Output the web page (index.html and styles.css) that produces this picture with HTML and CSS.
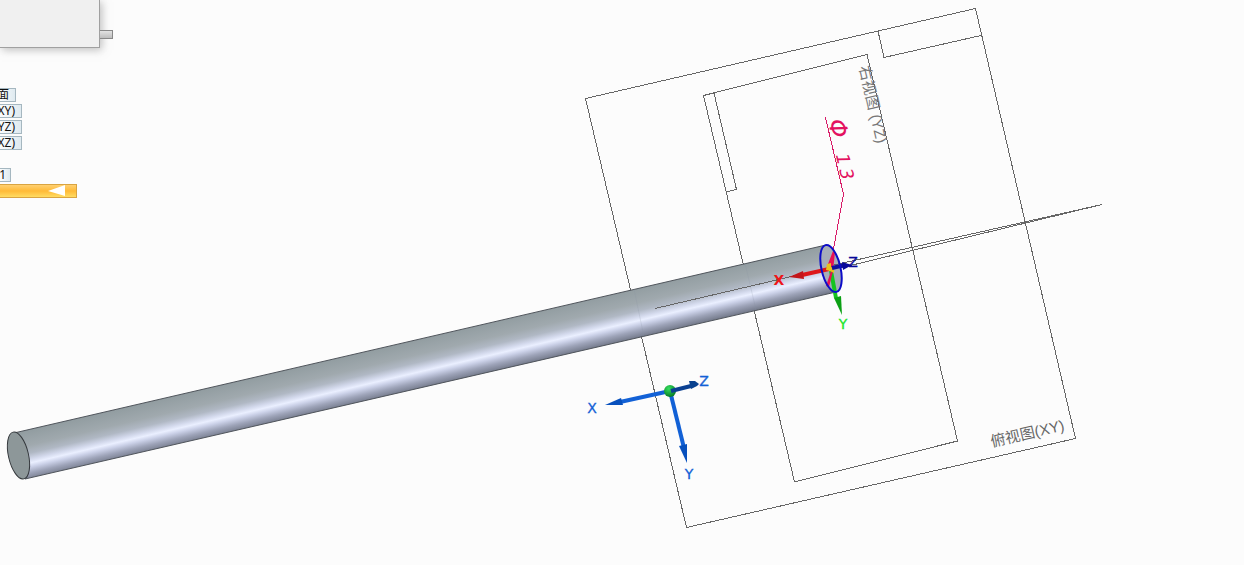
FILE: index.html
```
<!DOCTYPE html>
<html lang="zh-CN">
<head>
<meta charset="utf-8">
<title>俯视图(XY)</title>
<link rel="stylesheet" href="styles.css">
</head>
<body>
<main class="viewport">
  <svg class="scene" viewBox="0 0 1244 565" role="img" aria-label="Φ 13">
    <defs>
      <linearGradient id="steel" gradientUnits="userSpaceOnUse" x1="420" y1="339" x2="431" y2="386">
        <stop offset="0" stop-color="#929da1"/>
        <stop offset=".3" stop-color="#a0a9ae"/>
        <stop offset=".46" stop-color="#b0b8c4"/>
        <stop offset=".58" stop-color="#d2d8eb"/>
        <stop offset=".66" stop-color="#eaefff"/>
        <stop offset=".74" stop-color="#cbd1e8"/>
        <stop offset=".86" stop-color="#9da3b8"/>
        <stop offset="1" stop-color="#747a8b"/>
      </linearGradient>
      <radialGradient id="ball" cx=".4" cy=".3" r=".7">
        <stop offset="0" stop-color="#35e05f"/>
        <stop offset="1" stop-color="#067c25"/>
      </radialGradient>
    </defs>

    <!-- reference planes -->
    <g class="wire">
      <path d="M585.500 98.500L975.500 8.500L1075.500 438.500L686.500 527.500Z"/>
      <path d="M878 31L884 57.500L981 35.500"/>
      <path d="M703.500 95.500L867 54.500L957.500 441L794.500 482Z"/>
      <path d="M714 93L736.500 189.500L726 192"/>
    </g>

    <!-- shaft -->
    <path class="shaft" fill="url(#steel)" d="M14 433L826 245L836 292L25 479Z"/>
    <path class="edge" d="M14 433L826 245M25 479L836 292"/>
    <ellipse class="cap" cx="18.500" cy="455.500" rx="10" ry="24" transform="rotate(-13 18.500 455.500)"/>
    <ellipse class="cap-far" cx="831" cy="268.500" rx="10" ry="24" transform="rotate(-13 831 268.500)"/>

    <g class="wire">
      <path d="M655 308.500L800 274.500"/>
      <path d="M834 265L1102 204.500"/>
      <path d="M840 268L1102 204.500"/>
    </g>
    <path class="tint" d="M634 289L644 337M745 263L756 310"/>

    <!-- diameter callout -->
    <path class="leader" d="M825.500 117.500L843.500 194L833 252"/>
    <text class="dimension" transform="translate(828 121) rotate(77)"><tspan class="symbol" x="0">Φ</tspan><tspan x="35">1</tspan><tspan x="50">3</tspan></text>

    <!-- sketch axes -->
    <path class="rod red" d="M829 269L802 275"/>
    <path class="red-fill" d="M789 277L803 271L804 279Z"/>
    <path class="rod green" d="M831 271L836 298"/>
    <path class="green-fill" d="M834 298L841 296L842 315Z"/>
    <path class="leader-tip" d="M833 251L828 264L832 268L826 286L829 287L833 271L835 252Z"/>
    <path class="origin" d="M827 264L831 263L831 267L834 269L834 273L830 271L826 270Z"/>
    <path class="rod navy" d="M832 268L845 265"/>
    <path class="navy-fill" d="M842 262L852 265L843 270Z"/>
    <ellipse class="profile" cx="831" cy="268.500" rx="9.500" ry="24" transform="rotate(-13 831 268.500)"/>
    <text class="letter red-letter" x="779" y="285">X</text>
    <text class="letter navy-letter" x="853" y="267">Z</text>
    <text class="letter lime" x="843" y="329">Y</text>

    <!-- base axes -->
    <path class="rod blue" d="M670 391L620 402"/>
    <path class="blue-fill" d="M605 405L621 398L623 405Z"/>
    <path class="rod blue" d="M670 391L684 448"/>
    <path class="blue-fill" d="M679 446L687 444L687 463Z"/>
    <circle fill="url(#ball)" cx="670" cy="391" r="6"/>
    <path class="rod deep" d="M671 391L691 386"/>
    <path class="deep-fill" d="M689 381L695 381L699 384L697 386L691 389Z"/>
    <text class="letter blue-letter" x="592" y="413">X</text>
    <text class="letter blue-letter" x="704" y="386">Z</text>
    <text class="letter blue-letter" x="689" y="479">Y</text>

    <text class="plane-name" transform="translate(992 447) rotate(-13)">俯视图(XY)</text>
    <text class="plane-name side" transform="translate(859 67) rotate(77)">右视图<tspan x="50">(YZ)</tspan></text>
  </svg>

  <aside class="overlay">
    <div class="dock">
      <div class="panel"></div>
      <div class="handle"></div>
    </div>
    <nav class="tree">
      <button class="node root">面</button>
      <button class="node plane">XY)</button>
      <button class="node plane">YZ)</button>
      <button class="node plane">XZ)</button>
      <button class="node sketch">1</button>
      <button class="node current" aria-label="◁">
        <svg class="marker" viewBox="0 0 18 12"><path d="M0 6L17 0V11Z"/></svg>
      </button>
    </nav>
  </aside>
</main>
</body>
</html>
```
FILE: styles.css
```
body {
  margin: 0;
  background: #fcfcfc;
  font-family: "Noto Sans", "Noto Sans CJK SC", sans-serif;
}

.viewport {
  position: relative;
  overflow: hidden;
}

.scene {
  display: block;
  width: 100%;
  height: auto;
}

.wire {
  fill: none;
  stroke: #666;
  stroke-width: 1;
  shape-rendering: crispEdges;
}

.edge { fill: none; stroke: #50555c; }
.cap { fill: #8d9799; stroke: #34383c; }
.cap-far { fill: #a5adb8; }
.tint { fill: none; stroke: #8790a0; opacity: 0.2; }
.leader { fill: none; stroke: #d81b68; shape-rendering: crispEdges; }
.leader-tip { fill: #e81155; }

.dimension {
  fill: #e31260;
  font-family: "DejaVu Sans", sans-serif;
  font-size: 18px;
  font-style: italic;
}

.symbol { font-size: 24px; }

.plane-name {
  fill: #666;
  font-family: "Liberation Sans", "Noto Sans CJK SC", sans-serif;
  font-size: 15px;
}

.side { fill: #777; }

.letter {
  font-family: "DejaVu Sans", sans-serif;
  font-size: 14px;
  text-anchor: middle;
}

.red-letter { fill: #ee1518; stroke: #ee1518; font-weight: bold; stroke-width: 0; }
.blue-letter { fill: #1261d6; stroke: #1261d6; stroke-width: 0.3px; }
.navy-letter { fill: #08089a; stroke: #08089a; stroke-width: 0.3px; }
.lime { fill: #20e62b; stroke: #20e62b; stroke-width: 0.3px; }

.rod { fill: none; stroke-width: 4; }
.red { stroke: #dd171b; }
.red-fill { fill: #c3161b; }
.navy { stroke: #10109c; }
.navy-fill { fill: #08089a; }
.green { stroke: #16c420; }
.green-fill { fill: #0ba014; }
.blue { stroke: #1261d6; }
.blue-fill { fill: #0750bd; }
.deep { stroke: #0b4092; }
.deep-fill { fill: #09418f; }
.origin { fill: #e8c21c; }
.profile { fill: none; stroke: #0c0cc8; stroke-width: 2; }

.overlay {
  position: absolute;
  top: 0;
  left: 0;
}

.dock {
  display: flex;
  align-items: flex-start;
}

.panel {
  box-sizing: border-box;
  width: 100px;
  height: 48px;
  background: #f0f0f0;
  border: solid #a0a0a0;
  border-width: 0 1px 1px 0;
  box-shadow: 2px 2px 8px #8888;
}

.handle {
  box-sizing: border-box;
  width: 13px;
  height: 9px;
  margin-top: 30px;
  border: 1px solid #888;
  border-left: 0;
  background: linear-gradient(#e2e2e2, #bdbdbd);
}

.tree {
  display: flex;
  flex-direction: column;
  align-items: flex-start;
  gap: 2px;
  padding-top: 40px;
}

.node {
  display: flex;
  align-items: center;
  justify-content: flex-end;
  box-sizing: border-box;
  height: 14px;
  padding: 0 6px 0 0;
  overflow: hidden;
  border: 1px solid #a5b7c0;
  border-left: 0;
  background: linear-gradient(90deg, #fafcfd, #dfeaf0);
  color: #111;
  font: 12px/12px "Noto Sans", "Noto Sans CJK SC", sans-serif;
}

.root { width: 16px; }
.plane { width: 22px; }
.sketch { width: 11px; margin-top: 16px; padding-right: 4px; }

.current {
  width: 77px;
  padding-right: 10px;
  border-color: #d9a441;
  background: linear-gradient(#ffd071, #ffba37 50%, #ffdc62);
}

.marker {
  width: 18px;
  height: 12px;
  fill: #fff;
}
```
